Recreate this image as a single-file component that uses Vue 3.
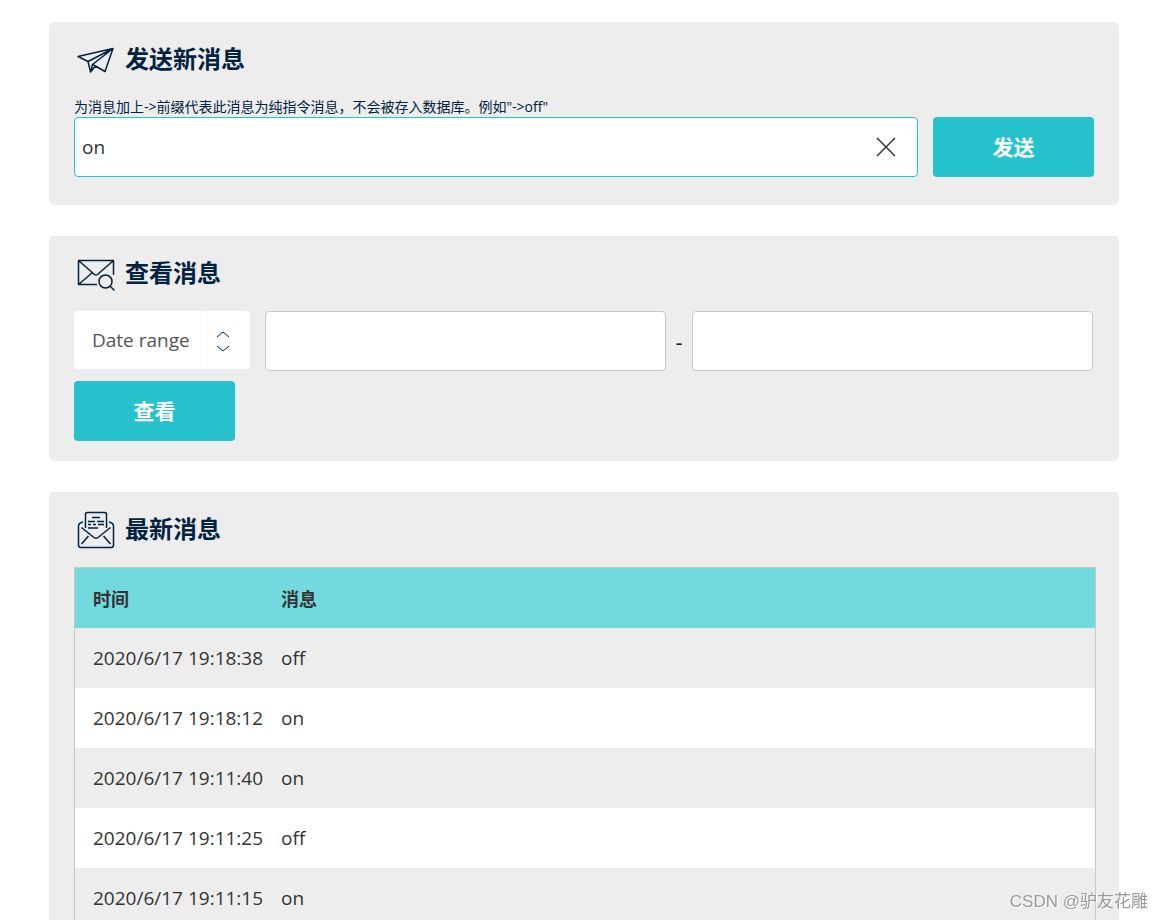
<script setup>
import { ref } from 'vue'

const message = ref('on')
const filter = ref('range')
const from = ref('')
const to = ref('')
const rows = [
  { time: '2020/6/17 19:18:38', text: 'off' },
  { time: '2020/6/17 19:18:12', text: 'on' },
  { time: '2020/6/17 19:11:40', text: 'on' },
  { time: '2020/6/17 19:11:25', text: 'off' },
  { time: '2020/6/17 19:11:15', text: 'on' },
]
</script>

<template>
  <main class="page">
    <section class="panel send">
      <header class="head">
        <svg class="icon" viewBox="0 0 38 38" aria-hidden="true">
          <path d="M1 15.500 36 7.500 28 30.500 18.500 25 13.500 31 11 20.500zM11 20.500 36 7.500 15.500 23.500 13.500 31M15.500 23.500 18.500 25" />
        </svg>
        <h2>发送新消息</h2>
      </header>
      <label class="hint" for="message">为消息加上-&gt;前缀代表此消息为纯指令消息，不会被存入数据库。例如"-&gt;off"</label>
      <form class="row" @submit.prevent>
        <div class="field">
          <input id="message" v-model="message" class="box active" type="text" />
          <button class="clear" type="button" aria-label="清除" @click="message = ''">
            <svg viewBox="0 0 20 20" aria-hidden="true"><path d="M1 1 19 19M19 1 1 19" /></svg>
          </button>
        </div>
        <button class="action" type="submit">发送</button>
      </form>
    </section>

    <section class="panel view">
      <header class="head">
        <svg class="icon" viewBox="0 0 38 38" aria-hidden="true">
          <path d="M20 29.500H1.500V5.500H36.500V20M1.500 5.500 17.500 19.500Q19 20.500 20.500 19.500L36.500 5.500M1.500 29.500 15.500 17.500" />
          <circle cx="28.500" cy="26.500" r="6.500" />
          <path d="M33 31 37.500 35.500" />
        </svg>
        <h2>查看消息</h2>
      </header>
      <form class="row wrap" @submit.prevent>
        <div class="select">
          <select v-model="filter" aria-label="查询方式">
            <option value="range">Date range</option>
          </select>
          <svg class="arrows" viewBox="0 0 14 22" aria-hidden="true"><path d="M1 6 7 1 13 6M1 15 7 20 13 15" /></svg>
        </div>
        <div class="range">
          <input v-model="from" class="box" type="text" aria-label="开始日期" />
          <span class="dash">-</span>
          <input v-model="to" class="box" type="text" aria-label="结束日期" />
        </div>
        <button class="action" type="submit">查看</button>
      </form>
    </section>

    <section class="panel">
      <header class="head">
        <svg class="icon" viewBox="0 0 38 38" aria-hidden="true">
          <path d="M8.500 17V3.500Q8.500 1.500 10.500 1.500H27.500Q29.500 1.500 29.500 3.500V17M6 11Q1.500 12 1.500 15V34Q1.500 36.500 4 36.500H34Q36.500 36.500 36.500 34V15Q36.500 12 32 11M4.500 16.500 17 26.500Q19 28 21 26.500L33.500 16.500M4.500 33 11.500 25M33.500 33 26.500 25" />
          <path d="M15 6.500H23M11 10.500H18M20 10.500H27M11 13.500H14M16 13.500H19M21 13.500H27M11 17H21" />
        </svg>
        <h2>最新消息</h2>
      </header>
      <table class="log">
        <thead>
          <tr><th class="time">时间</th><th>消息</th></tr>
        </thead>
        <tbody>
          <tr v-for="row in rows" :key="row.time"><td>{{ row.time }}</td><td>{{ row.text }}</td></tr>
        </tbody>
      </table>
    </section>
    <div class="watermark">CSDN @驴友花雕</div>
  </main>
</template>

<style>
body {
  margin: 0;
  background: #fff;
}
</style>

<style scoped>
.page,
.page * {
  box-sizing: border-box;
}
.page {
  height: 100vh;
  overflow: hidden;
  padding: 22px 44px 0 49px;
  color: #012340;
  font-family: "Open Sans", "Noto Sans CJK SC", sans-serif;
  font-size: 19px;
}
input,
select,
button {
  font: inherit;
}
.panel {
  margin-bottom: 31px;
  padding: 19px 25px 20px;
  border-radius: 5px;
  background: #ededed;
}
.panel.send {
  padding-bottom: 28px;
}
.head {
  display: flex;
  align-items: center;
  gap: 10px;
  height: 36px;
  margin-bottom: 20px;
  padding-left: 3px;
}
.send .head {
  margin-bottom: 19px;
}
h2 {
  margin: 0;
  font-size: 24px;
  line-height: 36px;
  font-weight: 700;
}
.icon {
  width: 38px;
  height: 38px;
  margin-top: 2px;
}
svg {
  display: block;
  flex: none;
  fill: none;
  stroke: #012340;
  stroke-width: 1.5;
  stroke-linejoin: round;
}
.hint {
  display: block;
  font-size: 14px;
  line-height: 21px;
}
.row {
  display: flex;
  gap: 15px;
}
.wrap {
  flex-wrap: wrap;
  row-gap: 10px;
}
.field {
  position: relative;
  flex: 1;
}
.box {
  display: block;
  width: 100%;
  min-width: 0;
  height: 60px;
  padding: 0 7px;
  border: 1px solid #c8c8c8;
  border-radius: 4px;
  outline: 0;
  background: #fff;
  color: #333;
}
.box.active {
  padding-right: 48px;
  border-color: #25c2ce;
}
.clear {
  position: absolute;
  top: 19px;
  right: 21px;
  width: 22px;
  height: 22px;
  padding: 1px;
  border: 0;
  background: none;
}
.clear svg {
  stroke: #333;
}
.action {
  width: 161px;
  height: 60px;
  padding: 0 0 2px;
  border: 0;
  border-radius: 4px;
  background: #25c2ce;
  color: #fff;
  font-size: 21px;
  font-weight: 700;
}
.select {
  position: relative;
  width: 176px;
  height: 58px;
}
.select select {
  width: 100%;
  height: 100%;
  padding: 0 60px 0 18px;
  border: 0;
  border-radius: 4px;
  outline: 0;
  appearance: none;
  background: linear-gradient(#fafafa, #fafafa) 133px 0 / 1px 100% no-repeat #fff;
  color: #555;
}
.arrows {
  position: absolute;
  top: 20px;
  right: 20px;
  width: 14px;
  height: 22px;
  stroke-width: 1;
  pointer-events: none;
}
.range {
  display: flex;
  flex: 1 0 calc(100% - 191px);
  align-items: center;
  padding-right: 1px;
}
.dash {
  flex: none;
  width: 26px;
  font-size: 22px;
  text-align: center;
}
.log {
  width: calc(100% + 2px);
  border: 1px solid #c8c8c8;
  border-spacing: 0;
  color: #333;
}
th,
td {
  height: 60px;
  padding: 0 18px;
  text-align: left;
}
th {
  background: #72dade;
  font-size: 18px;
  font-weight: 700;
}
.time {
  width: 188px;
}
td {
  padding-right: 0;
  white-space: nowrap;
}
tbody tr:nth-child(even) {
  background: #fff;
}
.watermark {
  position: fixed;
  right: 15px;
  bottom: 6px;
  color: #999;
  font-family: "Liberation Sans", "Noto Sans CJK SC", sans-serif;
  font-size: 17px;
  line-height: 24px;
  text-shadow: 1px 1px 0 #fff;
}
</style>
